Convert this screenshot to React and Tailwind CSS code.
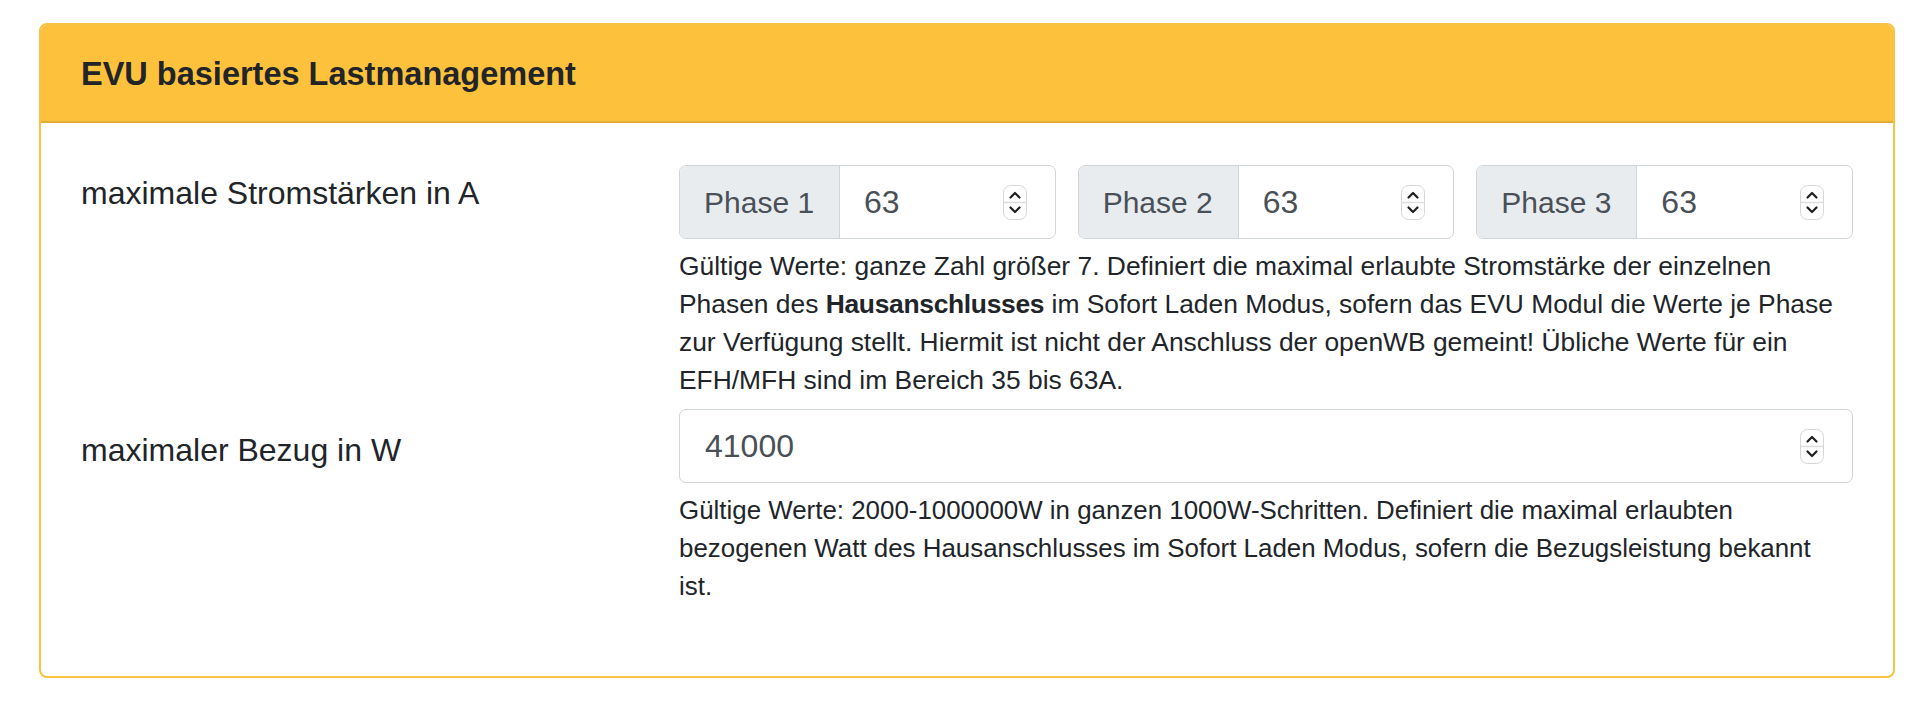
import React from "react";

const Spinner = () => (
  <svg width="24" height="35" viewBox="0 0 24 35" className="shrink-0">
    <rect x="0.5" y="0.5" width="23" height="34" rx="7" fill="#ffffff" stroke="#d6d6d6" />
    <line x1="1" y1="17.5" x2="23" y2="17.5" stroke="#dedede" strokeWidth="1.5" />
    <path d="M7.5 12.5 L12 8 L16.5 12.5" fill="none" stroke="#1f1f1f" strokeWidth="2.2" strokeLinecap="round" strokeLinejoin="round" />
    <path d="M7.5 22.5 L12 27 L16.5 22.5" fill="none" stroke="#1f1f1f" strokeWidth="2.2" strokeLinecap="round" strokeLinejoin="round" />
  </svg>
);

const PhaseGroup = ({ label, value }) => (
  <div className="flex h-[74px] rounded-[7px] border border-[#ced4da] overflow-hidden bg-white">
    <div className="w-[160px] shrink-0 flex items-center pl-[24px] bg-[#e9ecef] border-r border-[#ced4da] text-[30px] text-[#495057]">
      {label}
    </div>
    <div className="flex-1 flex items-center justify-between pl-[24px] pr-[28px] text-[32px] text-[#495057]">
      <span>{value}</span>
      <Spinner />
    </div>
  </div>
);

export default function App() {
  return (
    <div className="min-h-[702px] bg-white pt-[23px] pl-[39px] pr-[37px] font-['Liberation_Sans',Arial,sans-serif] text-[#212529]">
      <div className="rounded-[8px] border-2 border-[#f8c243] overflow-hidden">
        <div className="bg-[#fec13b] border-b-2 border-[#e4ad31] pt-[25px] pb-[23px] px-[40px] text-[32.5px] leading-[48px] font-bold">
          EVU basiertes Lastmanagement
        </div>
        <div className="grid grid-cols-[598px_minmax(0,1fr)] px-[40px] pt-[42px] pb-[71px]">
          <div className="pt-[5px] text-[32px] leading-[47px]">maximale Stromstärken in A</div>
          <div className="min-w-0">
            <div className="grid grid-cols-3 gap-[22px]">
              <PhaseGroup label="Phase 1" value="63" />
              <PhaseGroup label="Phase 2" value="63" />
              <PhaseGroup label="Phase 3" value="63" />
            </div>
            <p className="mt-[8px] text-[26.4px] leading-[38px] whitespace-nowrap">
              Gültige Werte: ganze Zahl größer 7. Definiert die maximal erlaubte Stromstärke der einzelnen
              <br />
              Phasen des <b className="font-bold tracking-[-0.3px]">Hausanschlusses</b> im Sofort Laden Modus, sofern das EVU Modul die Werte je Phase
              <br />
              zur Verfügung stellt. Hiermit ist nicht der Anschluss der openWB gemeint! Übliche Werte für ein
              <br />
              EFH/MFH sind im Bereich 35 bis 63A.
            </p>
          </div>
          <div className="mt-[10px] pt-[18px] text-[32px] leading-[47px]">maximaler Bezug in W</div>
          <div className="mt-[10px] min-w-0">
            <div className="flex h-[74px] items-center justify-between rounded-[7px] border border-[#ced4da] bg-white pl-[25px] pr-[28px] text-[32px] text-[#495057]">
              <span>41000</span>
              <Spinner />
            </div>
            <p className="mt-[8px] text-[25.9px] leading-[38px] whitespace-nowrap">
              Gültige Werte: 2000-1000000W in ganzen 1000W-Schritten. Definiert die maximal erlaubten
              <br />
              bezogenen Watt des Hausanschlusses im Sofort Laden Modus, sofern die Bezugsleistung bekannt
              <br />
              ist.
            </p>
          </div>
        </div>
      </div>
    </div>
  );
}
